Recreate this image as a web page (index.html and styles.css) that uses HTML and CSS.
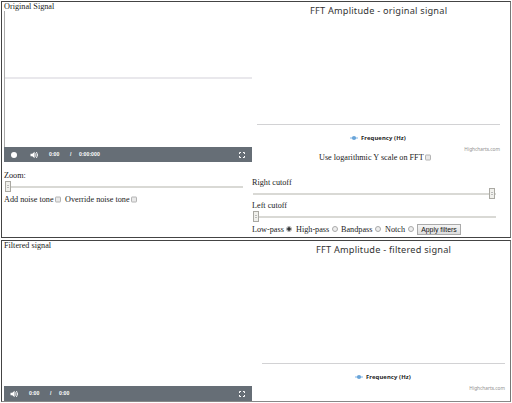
FILE: index.html
```html
<!DOCTYPE html>
<html lang="en">
<head>
<meta charset="utf-8">
<title>Signal filter</title>
<link rel="stylesheet" href="styles.css">
</head>
<body>
<svg width="0" height="0" class="defs">
  <symbol id="speaker" viewBox="0 0 9 8"><path d="M.5 2.8H2.3L4.6.7V7.3L2.3 5.2H.5z" fill="#fff"/><path d="M5.5 2.4Q6.5 4 5.5 5.6M6.4 1Q8.9 4 6.4 7" fill="none" stroke="#fff" stroke-width=".9"/></symbol>
  <symbol id="full" viewBox="0 0 6 6"><path d="M.5 2V.5H2M4 .5H5.5V2M5.5 4V5.5H4M2 5.5H.5V4" fill="none" stroke="#fff" stroke-width="1"/></symbol>
  <symbol id="marker" viewBox="0 0 8 6"><path d="M0 3H8" stroke="#7cb5ec" stroke-width="1"/><circle cx="4" cy="3" r="2.1" fill="#6aa5d8"/></symbol>
</svg>
<section class="panel original">
  <div class="left">
    <div class="heading">Original Signal</div>
    <div class="wave"><div class="midline"></div></div>
    <div class="player">
      <i class="record"></i>
      <svg class="speaker"><use href="#speaker"/></svg>
      <span class="now">0:00</span><span class="slash">/</span><span class="total">0:00:000</span>
      <svg class="full"><use href="#full"/></svg>
    </div>
    <div class="row zoom">Zoom:</div>
    <div class="slider"><i class="thumb"></i></div>
    <div class="row noise"><span class="add">Add noise tone</span><i class="check"></i><span class="override">Override noise tone</span><i class="check"></i></div>
  </div>
  <div class="right">
    <div class="chart">
      <h2>FFT Amplitude - original signal</h2>
      <div class="axis"></div>
      <div class="legend"><svg><use href="#marker"/></svg><b>Frequency (Hz)</b></div>
      <div class="credit">Highcharts.com</div>
    </div>
    <div class="row log"><span>Use logarithmic Y scale on FFT</span><i class="check"></i></div>
    <div class="row cut-right">Right cutoff</div>
    <div class="slider max"><i class="thumb"></i></div>
    <div class="row cut-left">Left cutoff</div>
    <div class="slider"><i class="thumb"></i></div>
    <div class="row filters">
      <span class="low">Low-pass</span><i class="radio on"></i>
      <span class="high">High-pass</span><i class="radio"></i>
      <span class="band">Bandpass</span><i class="radio"></i>
      <span class="notch">Notch</span><i class="radio"></i>
      <button>Apply filters</button>
    </div>
  </div>
</section>
<section class="panel filtered">
  <div class="left">
    <div class="heading">Filtered signal</div>
    <div class="blank"></div>
    <div class="player">
      <svg class="speaker"><use href="#speaker"/></svg>
      <span class="now">0:00</span><span class="slash">/</span><span class="total">0:00</span>
      <svg class="full"><use href="#full"/></svg>
    </div>
  </div>
  <div class="right">
    <div class="chart">
      <h2>FFT Amplitude - filtered signal</h2>
      <div class="axis"></div>
      <div class="legend"><svg><use href="#marker"/></svg><b>Frequency (Hz)</b></div>
      <div class="credit">Highcharts.com</div>
    </div>
  </div>
</section>
</body>
</html>
```
FILE: styles.css
```css
* { box-sizing: border-box; }
body {
  margin: 0;
  padding: 1px 1px 0;
  height: 403px;
  overflow: hidden;
  background: #fff;
  color: #222;
  font: 8.2px/10px "Liberation Serif", serif;
}
.defs { display: block; }
.panel {
  display: flex;
  width: 510px;
  border: 1px solid #444;
  border-right-color: #777;
}
.original { height: 237px; margin-bottom: 2px; }
.filtered { height: 162px; border-bottom-color: #888; }
.left { width: 248px; margin-left: 2px; }
.right { width: 252px; }
.heading { height: 9px; line-height: 9px; white-space: nowrap; }
.wave { height: 136px; padding-top: 66px; border-left: 1px solid #aaa; }
.midline { height: 2px; background: #e9e8ec; }
.blank { height: 136px; }

.player {
  display: flex;
  align-items: center;
  height: 15px;
  padding: 0 7px;
  background: #666e76;
  color: #fff;
  font: bold 5.2px/15px "Liberation Sans", sans-serif;
}
.record { width: 6px; height: 6px; border-radius: 50%; background: #fff; margin-right: 13px; }
.speaker { width: 9px; height: 8px; margin-right: 10px; }
.now { width: 21px; }
.slash { width: 9px; }
.full { width: 6px; height: 6px; margin-left: auto; }
.filtered .speaker { margin-left: -1px; }

.row { display: flex; align-items: center; height: 10px; white-space: nowrap; }
.zoom { margin-top: 9px; }
.slider {
  display: flex;
  align-items: center;
  width: 239px;
  height: 11px;
}
.slider::after { content: ""; flex: 1; height: 2px; background: #d9d9d5; }
.thumb {
  width: 6px;
  height: 11px;
  margin-left: 1px;
  border: 1px solid #aaa9a3;
  background: repeating-linear-gradient(#f3f3ef 0 1px, #bbb 1px 2px) center / 2px 5px no-repeat #f0f0ec;
}
.max .thumb { order: 2; margin: 0 0 0 -7px; z-index: 1; }
.original .right .slider { width: 244px; }
.original .right .max { width: 243px; padding-left: 1px; }
.noise { margin-top: 3px; }
.noise .check, .log .check { transform: translateY(-.5px); }
.check {
  width: 6px;
  height: 6px;
  border: 1px solid #b4b4b4;
  border-radius: 1px;
  background: #e9e9e9;
}
.add { width: 51px; }
.override { width: 66px; margin-left: 4px; }

.chart { height: 151px; display: flex; flex-direction: column; }
h2 {
  margin: 3px 0 0;
  height: 12px;
  color: #333;
  font: 9.2px/12px "Noto Sans", sans-serif;
  letter-spacing: .22px;
  white-space: nowrap;
  padding-left: 58px;
}
.axis { width: 243px; height: 1px; margin: 107px 0 0 5px; background: #d2d2d4; flex: none; }
.legend {
  display: flex;
  align-items: center;
  height: 8px;
  margin: 9px 0 0 98px;
  color: #222;
  font: 5.9px/8px "Noto Sans", sans-serif;
  letter-spacing: .1px;
}
.legend svg { width: 8px; height: 6px; margin-right: 3px; }
.credit {
  width: 248px;
  height: 7px;
  margin-top: 4px;
  color: #909090;
  text-align: right;
  font: 4.8px/7px "Noto Sans", sans-serif;
}
.log { padding-left: 67px; }
.log span { width: 106px; }
.cut-right { margin-top: 15px; }
.cut-left { margin-top: 2px; }
.filters { height: 13px; margin-top: 1px; }
.radio {
  width: 6px;
  height: 6px;
  border: 1px solid #aaa;
  border-radius: 50%;
  background: #eee;
  transform: translateY(-1px);
}
.on { background: radial-gradient(circle, #333 0 1.5px, #eee 2px); }
.low { width: 34px; }
.high { width: 36px; margin-left: 4px; }
.band { width: 34px; margin-left: 3px; }
.notch { width: 23px; margin-left: 4px; }
button {
  width: 44px;
  height: 11px;
  margin: 0 0 0 3px;
  padding: 0;
  border: 1px solid #aaa;
  background: linear-gradient(#f5f5f5, #ddd);
  color: #111;
  font: 6.9px/9px "Liberation Sans", sans-serif;
}
.filtered h2 { padding-left: 64px; }
.filtered .axis { margin: 107px 0 0 10px; }
.filtered .legend { margin-left: 103px; }
.filtered .credit { width: 253px; }
```
